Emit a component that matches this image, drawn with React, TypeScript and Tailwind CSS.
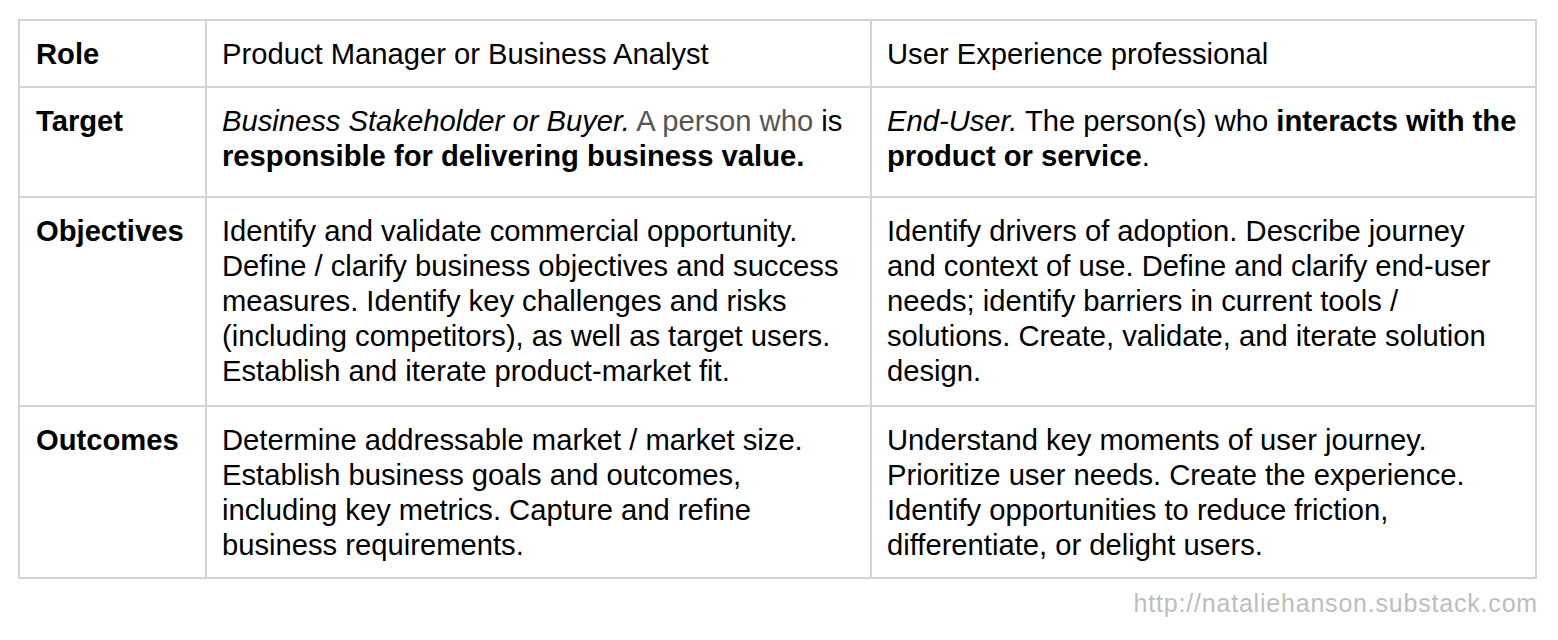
const FONT = "font-['Liberation_Sans',Arial,sans-serif]";

function Cell({ children, first }: { children: React.ReactNode; first?: boolean }) {
  return (
    <div
      className={`bg-white pt-[16px] text-[29.2px] leading-[35px] text-black whitespace-nowrap ${
        first ? "pl-[16px] font-bold" : "pl-[15px]"
      }`}
    >
      {children}
    </div>
  );
}

export default function App() {
  return (
    <div className={`min-h-[640px] w-[1558px] bg-white ${FONT}`}>
      <div className="ml-[18px] pt-[19px] w-[1519px]">
        <div className="grid grid-cols-[185px_663px_663px] grid-rows-[65px_108px_207px_170px] gap-[2px] bg-[#d3d3d3] p-[2px]">
          {/* Role */}
          <Cell first>Role</Cell>
          <Cell>Product Manager or Business Analyst</Cell>
          <Cell>User Experience professional</Cell>

          {/* Target */}
          <Cell first>Target</Cell>
          <Cell>
            <i>Business Stakeholder or Buyer.</i>{" "}
            <span className="text-[#555555]">A person who</span> is
            <br />
            <b>responsible for delivering business value.</b>
          </Cell>
          <Cell>
            <i>End-User.</i> The person(s) who <b>interacts with the</b>
            <br />
            <b>product or service</b>.
          </Cell>

          {/* Objectives */}
          <Cell first>Objectives</Cell>
          <Cell>
            Identify and validate commercial opportunity.
            <br />
            Define / clarify business objectives and success
            <br />
            measures. Identify key challenges and risks
            <br />
            (including competitors), as well as target users.
            <br />
            Establish and iterate product-market fit.
          </Cell>
          <Cell>
            Identify drivers of adoption. Describe journey
            <br />
            and context of use. Define and clarify end-user
            <br />
            needs; identify barriers in current tools /
            <br />
            solutions. Create, validate, and iterate solution
            <br />
            design.
          </Cell>

          {/* Outcomes */}
          <Cell first>Outcomes</Cell>
          <Cell>
            Determine addressable market / market size.
            <br />
            Establish business goals and outcomes,
            <br />
            including key metrics. Capture and refine
            <br />
            business requirements.
          </Cell>
          <Cell>
            Understand key moments of user journey.
            <br />
            Prioritize user needs. Create the experience.
            <br />
            Identify opportunities to reduce friction,
            <br />
            differentiate, or delight users.
          </Cell>
        </div>
        <div className="mt-[10px] text-right text-[25px] leading-[28px] tracking-[0.8px] text-[#bdbdbd] -mr-[1px]">
          http://nataliehanson.substack.com
        </div>
      </div>
    </div>
  );
}
